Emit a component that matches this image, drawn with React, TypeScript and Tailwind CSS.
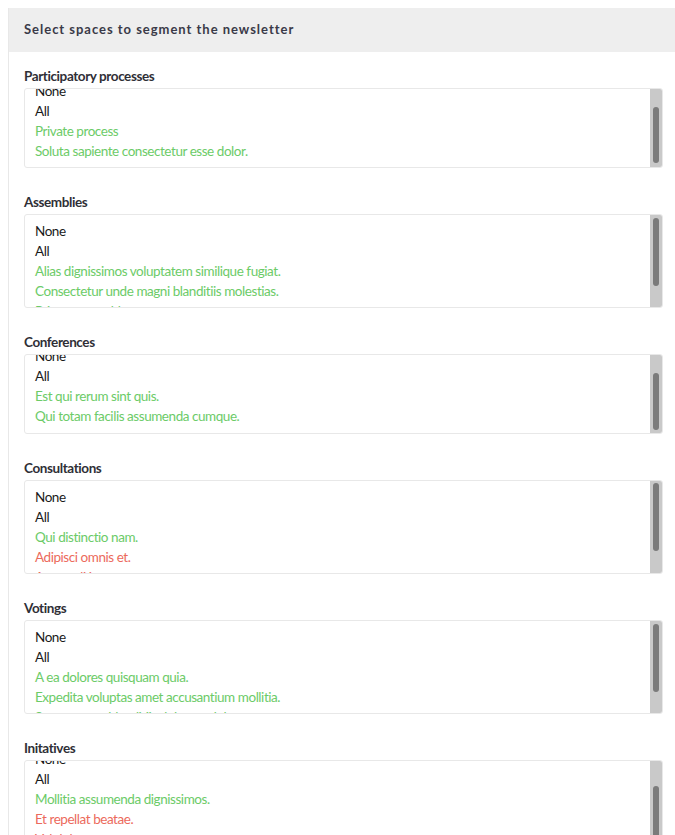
import React from "react";

type Item = { t: string; c: "k" | "g" | "r" };

type Box = {
  label: string;
  h: number;
  scroll: number;
  thumbTop: number;
  thumbH: number;
  items: Item[];
};

const base: Item[] = [
  { t: "None", c: "k" },
  { t: "All", c: "k" },
];

const boxes: Box[] = [
  {
    label: "Participatory processes",
    h: 80,
    scroll: 14,
    thumbTop: 18,
    thumbH: 56,
    items: [
      ...base,
      { t: "Private process", c: "g" },
      { t: "Soluta sapiente consectetur esse dolor.", c: "g" },
    ],
  },
  {
    label: "Assemblies",
    h: 94,
    scroll: 0,
    thumbTop: 3,
    thumbH: 68,
    items: [
      ...base,
      { t: "Alias dignissimos voluptatem similique fugiat.", c: "g" },
      { t: "Consectetur unde magni blanditiis molestias.", c: "g" },
      { t: "Private assembly", c: "g" },
      { t: "Quia et natus.", c: "g" },
    ],
  },
  {
    label: "Conferences",
    h: 80,
    scroll: 15,
    thumbTop: 18,
    thumbH: 57,
    items: [
      ...base,
      { t: "Est qui rerum sint quis.", c: "g" },
      { t: "Qui totam facilis assumenda cumque.", c: "g" },
    ],
  },
  {
    label: "Consultations",
    h: 94,
    scroll: 0,
    thumbTop: 2,
    thumbH: 68,
    items: [
      ...base,
      { t: "Qui distinctio nam.", c: "g" },
      { t: "Adipisci omnis et.", c: "r" },
      { t: "Aut modi iste.", c: "r" },
      { t: "Illum et ut.", c: "g" },
    ],
  },
  {
    label: "Votings",
    h: 94,
    scroll: 0,
    thumbTop: 3,
    thumbH: 68,
    items: [
      ...base,
      { t: "A ea dolores quisquam quia.", c: "g" },
      { t: "Expedita voluptas amet accusantium mollitia.", c: "g" },
      { t: "Sunt quaerat blanditiis dolorum dolores.", c: "g" },
      { t: "Eum iusto dicta.", c: "g" },
    ],
  },
  {
    label: "Initatives",
    h: 110,
    scroll: 18,
    thumbTop: 25,
    thumbH: 68,
    items: [
      ...base,
      { t: "Mollitia assumenda dignissimos.", c: "g" },
      { t: "Et repellat beatae.", c: "r" },
      { t: "Vel dolor.", c: "r" },
      { t: "Rem quia et.", c: "g" },
    ],
  },
];

const colorCls = { k: "text-[#1a1a1a]", g: "text-[#6ccb68]", r: "text-[#ec6a5c]" };

function Select({ b }: { b: Box }) {
  return (
    <div
      className="flex border border-[#e8e8e8] rounded-[3px] bg-white overflow-hidden"
      style={{ height: b.h }}
    >
      <div className="flex-1 overflow-hidden">
        <div className="pt-[6px] pb-[6px] px-[10px]" style={{ marginTop: -b.scroll }}>
          {b.items.map((it, i) => (
            <div
              key={i}
              className={`h-5 leading-5 text-[13.5px] tracking-[-0.45px] ${colorCls[it.c]}`}
            >
              {it.t}
            </div>
          ))}
        </div>
      </div>
      <div className="w-[12px] bg-[#c9c9c9] flex justify-center">
        <div
          className="w-[6px] rounded-full bg-[#7b7b7b]"
          style={{ marginTop: b.thumbTop, height: b.thumbH }}
        />
      </div>
    </div>
  );
}

export default function App() {
  return (
    <div
      className="bg-white min-h-[835px] pt-2 pl-2"
      style={{ fontFamily: "Lato, Roboto, sans-serif" }}
    >
      <div className="border-l border-[#e8e8e8]">
        <div className="h-[44px] bg-[#eeeeee] flex items-center px-[15px]">
          <span className="text-[13px] font-bold tracking-[0.075em] text-[#3a3a48]">
            Select spaces to segment the newsletter
          </span>
        </div>
        <div className="pl-[15px] pr-[12px] pt-[15px] flex flex-col gap-[25px]">
          {boxes.map((b, i) => (
            <div key={i}>
              <div className="h-[21px] leading-[18px] text-[13.5px] tracking-[-0.4px] font-bold text-[#2f2f36]">
                {b.label}
              </div>
              <Select b={b} />
            </div>
          ))}
        </div>
      </div>
    </div>
  );
}
